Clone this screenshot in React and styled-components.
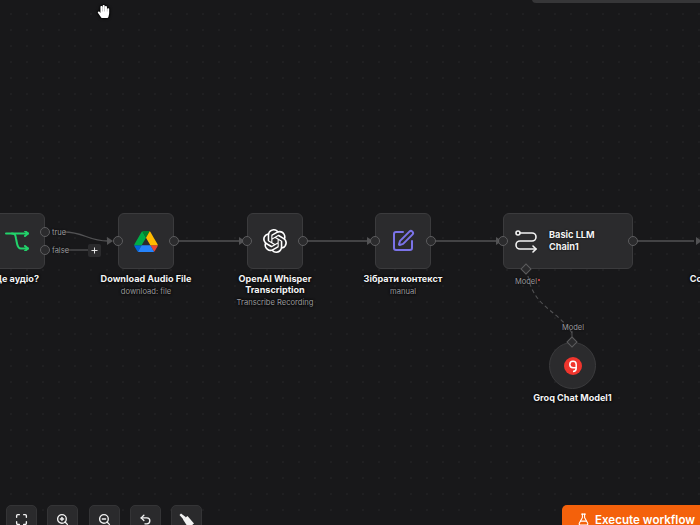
import React from "react";
import styled, { createGlobalStyle } from "styled-components";
import { Maximize, ZoomIn, ZoomOut, Undo2, FlaskConical, SquarePen, Plus } from "lucide-react";
import { FaHandPaper } from "react-icons/fa";
import { SiOpenai } from "react-icons/si";

const Global = createGlobalStyle`
	html, body {
		margin: 0;
		padding: 0;
		background: #18181a;
	}
	body {
		font-family: Inter, "Liberation Sans", sans-serif;
	}
`;

const Canvas = styled.div`
	position: relative;
	width: 700px;
	height: 525px;
	overflow: hidden;
	background-color: #18181a;
	background-image: radial-gradient(circle, #272729 0.6px, transparent 0.8px);
	background-size: 16px 16px;
	background-position: 3px 6px;
`;

const TopPanel = styled.div`
	position: absolute;
	top: -6px;
	right: 0;
	width: 168px;
	height: 9px;
	background: #363638;
	border-radius: 4px 0 0 4px;
`;

const Wires = styled.svg`
	position: absolute;
	inset: 0;
`;

// each node sits at its own place on the canvas, box and captions stack inside it
const NodeGroup = styled.div`
	position: absolute;
	left: ${(p) => p.$x}px;
	top: ${(p) => p.$y}px;
	display: flex;
	flex-direction: column;
	align-items: center;
	gap: ${(p) => p.$gap || 4}px;
`;

const NodeBox = styled.div`
	position: relative;
	width: ${(p) => p.$w || 56}px;
	height: 56px;
	box-sizing: border-box;
	display: flex;
	align-items: center;
	justify-content: ${(p) => (p.$wide ? "flex-start" : "center")};
	gap: 12px;
	padding-left: ${(p) => (p.$wide ? "11px" : "0")};
	background: #2b2b2d;
	border: 1px solid #3b3b3d;
	border-radius: 6px;
`;

const RoundBox = styled.div`
	position: relative;
	width: 47px;
	height: 47px;
	box-sizing: border-box;
	display: flex;
	align-items: center;
	justify-content: center;
	background: #2b2b2d;
	border: 1px solid #3b3b3d;
	border-radius: 50%;
`;

const NodeTitle = styled.div`
	color: #f4f4f5;
	font-size: 9.2px;
	font-weight: 700;
	line-height: 12px;
	text-shadow: 0 0 2px #000;
`;

const Caption = styled.div`
	display: flex;
	flex-direction: column;
	align-items: center;
	gap: 3px;
	width: 0;
	white-space: nowrap;
	text-align: center;
	color: #f4f4f5;
	font-size: 9.1px;
	font-weight: 700;
	line-height: 11px;
	text-shadow: 0 0 3px #000, 0 0 2px #000;
`;

const SubLabel = styled.div`
	color: #9a9a9e;
	font-size: 7.6px;
	font-weight: 400;
	line-height: 10px;
`;

const Handle = styled.span`
	position: absolute;
	${(p) => (p.$out ? "right: -5.5px" : "left: -6px")};
	top: ${(p) => p.$top ?? 22}px;
	width: 8px;
	height: 8px;
	background: #2b2b2d;
	border: 1px solid #5c5c5e;
	border-radius: 50%;
`;

const Diamond = styled.span`
	position: absolute;
	width: 6px;
	height: 6px;
	background: #2b2b2d;
	border: 1px solid #5c5c5e;
	transform: rotate(45deg);
	${(p) => (p.$onTop ? "top: -5px; left: 18px;" : "bottom: -5px; left: 18px;")}
`;

const WireText = styled.span`
	position: absolute;
	left: ${(p) => p.$x}px;
	top: ${(p) => p.$y}px;
	color: #9a9a9e;
	font-size: 7.5px;
	line-height: 9px;
	white-space: nowrap;
	text-shadow: 0 0 2px #000;
`;

const Required = styled.i`
	display: inline-block;
	width: 2px;
	height: 2px;
	margin-left: 1px;
	vertical-align: 3px;
	border-radius: 50%;
	background: #e5484d;
`;

const AddButton = styled.span`
	position: absolute;
	left: 88px;
	top: 244px;
	width: 13px;
	height: 13px;
	display: flex;
	align-items: center;
	justify-content: center;
	background: #2b2b2d;
	border-radius: 2px;
	color: #f0f0f0;
`;

const Cursor = styled.span`
	position: absolute;
	left: 97px;
	top: 5px;
	display: flex;
	color: #fff;
	filter: drop-shadow(0 0 1px #000) drop-shadow(0 0 1px #000);
`;

const Toolbar = styled.div`
	position: absolute;
	left: 6px;
	top: 505px;
	display: flex;
	gap: 10.25px;
`;

const ToolButton = styled.button`
	width: 31px;
	height: 32px;
	padding: 7px 0 0;
	display: flex;
	justify-content: center;
	align-items: flex-start;
	background: #2a2a2c;
	border: 1px solid #343436;
	border-radius: 5px;
	color: #f2f2f2;
`;

const ExecuteButton = styled.button`
	position: absolute;
	left: 562px;
	top: 505px;
	width: 170px;
	height: 36px;
	padding: 8px 0 0 15px;
	display: flex;
	align-items: flex-start;
	gap: 5px;
	background: #f4610b;
	border: none;
	border-radius: 5px;
	color: #fff;
	font-family: inherit;
	font-size: 11.6px;
	font-weight: 600;
	line-height: 15px;
`;

const BranchIcon = () => (
	<svg width="24" height="20" viewBox="0 0 24 20" fill="none" stroke="#22d36b" strokeWidth="2" strokeLinecap="round" strokeLinejoin="round">
		<path d="M1 2.500H23" />
		<path d="M7 2.500c3 0 3.500 1.500 4 5l1 5c.5 2.500 1.500 5 4 5H23" />
		<path d="M20 0l3 2.500-3 2.500M20 15l3 2.500-3 2.500" />
	</svg>
);

const DriveIcon = () => (
	<svg width="24" height="21" viewBox="0 0 87.300 78">
		<path d="m6.600 66.850 3.850 6.650c.8 1.400 1.950 2.500 3.300 3.300l13.750-23.800H0c0 1.550.4 3.100 1.200 4.500z" fill="#0066da" />
		<path d="M43.650 25 29.900 1.200c-1.350.8-2.500 1.900-3.300 3.300L1.200 48.500A9 9 0 0 0 0 53h27.500z" fill="#00ac47" />
		<path d="M73.550 76.800c1.350-.8 2.500-1.900 3.300-3.300l1.600-2.750 7.650-13.250c.8-1.400 1.200-2.950 1.200-4.500H59.800l5.850 11.500z" fill="#ea4335" />
		<path d="M43.650 25 57.400 1.200C56.050.4 54.500 0 52.900 0H34.400c-1.600 0-3.150.45-4.500 1.200z" fill="#00832d" />
		<path d="M59.800 53H27.500L13.750 76.800c1.350.8 2.900 1.200 4.500 1.200h50.800c1.600 0 3.150-.45 4.500-1.200z" fill="#2684fc" />
		<path d="M73.400 26.500 60.700 4.500c-.8-1.400-1.950-2.500-3.300-3.300L43.650 25 59.800 53h27.450c0-1.550-.4-3.100-1.200-4.500z" fill="#ffba00" />
	</svg>
);

const ChainIcon = () => (
	<svg width="22" height="24" viewBox="0 0 22 24" fill="none" stroke="#f2f2f2" strokeWidth="1.600" strokeLinecap="round" strokeLinejoin="round">
		<circle cx="3" cy="4" r="2" />
		<path d="M5 4h12c2.200 0 4 1.800 4 4s-1.800 4-4 4H5c-2.200 0-4 1.800-4 4s1.800 4 4 4h16" />
		<path d="M18 17l3 3-3 3" />
	</svg>
);

const GroqIcon = () => (
	<svg width="18" height="18" viewBox="0 0 18 18">
		<circle cx="9" cy="9" r="9" fill="#f0352d" />
		<path d="M9 14.500c2 0 3.200-1.200 3.200-3.200V7.500a3.200 3.200 0 1 0-3.200 3.200h3.200" fill="none" stroke="#fff" strokeWidth="1.500" />
	</svg>
);

const BroomIcon = () => (
	<svg width="15" height="15" viewBox="0 0 15 15" fill="#f2f2f2">
		<path d="M.5 2 2 .5l5 3.700-2.300 2.600z" />
		<path d="M4 6.500 8.500 3 15 10.500 9.500 15z" />
	</svg>
);

const App = () => {
	return (
		<Canvas>
			<Global />
			<TopPanel />
			<Wires width="700" height="525" fill="none">
				<g stroke="#525254" strokeWidth="1.300">
					<path d="M64 232C84 232 88 241 108 241" />
					<path d="M64 250H88" />
					<path d="M178 241H239M307 241H367M435 241H496M637 241H694" />
				</g>
				<path d="M528 276C534 308 558 310 572 333" stroke="#525254" strokeWidth="1.100" strokeDasharray="4 3" />
				<path d="M572 331v6" stroke="#525254" />
				<path d="M107 237l6 4-6 4zM239 237l6 4-6 4zM367 237l6 4-6 4zM496 237l6 4-6 4zM696 237l6 4-6 4z" fill="#525254" />
			</Wires>

			<NodeGroup $x={-11} $y={213}>
				<NodeBox>
					<BranchIcon />
					<Handle $out $top={13} />
					<Handle $out $top={31} />
					<WireText $x={62} $y={14}>true</WireText>
					<WireText $x={62} $y={32}>false</WireText>
				</NodeBox>
				<Caption>Це аудіо?</Caption>
			</NodeGroup>

			<NodeGroup $x={118} $y={213}>
				<NodeBox>
					<DriveIcon />
					<Handle />
					<Handle $out />
				</NodeBox>
				<Caption>
					Download Audio File
					<SubLabel>download: file</SubLabel>
				</Caption>
			</NodeGroup>

			<NodeGroup $x={247} $y={213}>
				<NodeBox>
					<SiOpenai size={24} color="#fff" />
					<Handle />
					<Handle $out />
				</NodeBox>
				<Caption>
					<div>OpenAI Whisper<br />Transcription</div>
					<SubLabel>Transcribe Recording</SubLabel>
				</Caption>
			</NodeGroup>

			<NodeGroup $x={375} $y={213}>
				<NodeBox>
					<SquarePen size={24} color="#7b73e8" strokeWidth={2} />
					<Handle />
					<Handle $out />
				</NodeBox>
				<Caption>
					Зібрати контекст
					<SubLabel>manual</SubLabel>
				</Caption>
			</NodeGroup>

			<NodeGroup $x={503} $y={213}>
				<NodeBox $w={130} $wide>
					<ChainIcon />
					<NodeTitle>Basic LLM<br />Chain1</NodeTitle>
					<Handle />
					<Handle $out />
					<Diamond />
					<WireText $x={11} $y={63}>Model<Required /></WireText>
				</NodeBox>
			</NodeGroup>

			<NodeGroup $x={696} $y={273}>
				<Caption>Co</Caption>
			</NodeGroup>

			<NodeGroup $x={549} $y={342} $gap={3}>
				<RoundBox>
					<GroqIcon />
					<Diamond $onTop />
					<WireText $x={12} $y={-20}>Model</WireText>
				</RoundBox>
				<Caption>Groq Chat Model1</Caption>
			</NodeGroup>

			<AddButton><Plus size={9} strokeWidth={2.500} /></AddButton>
			<Cursor><FaHandPaper size={13} /></Cursor>

			<Toolbar>
				<ToolButton><Maximize size={13} strokeWidth={2.500} /></ToolButton>
				<ToolButton><ZoomIn size={13} strokeWidth={2.500} /></ToolButton>
				<ToolButton><ZoomOut size={13} strokeWidth={2.500} /></ToolButton>
				<ToolButton><Undo2 size={13} strokeWidth={2.500} /></ToolButton>
				<ToolButton><BroomIcon /></ToolButton>
			</Toolbar>

			<ExecuteButton>
				<FlaskConical size={13} />
				Execute workflow
			</ExecuteButton>
		</Canvas>
	);
};

export default App;
